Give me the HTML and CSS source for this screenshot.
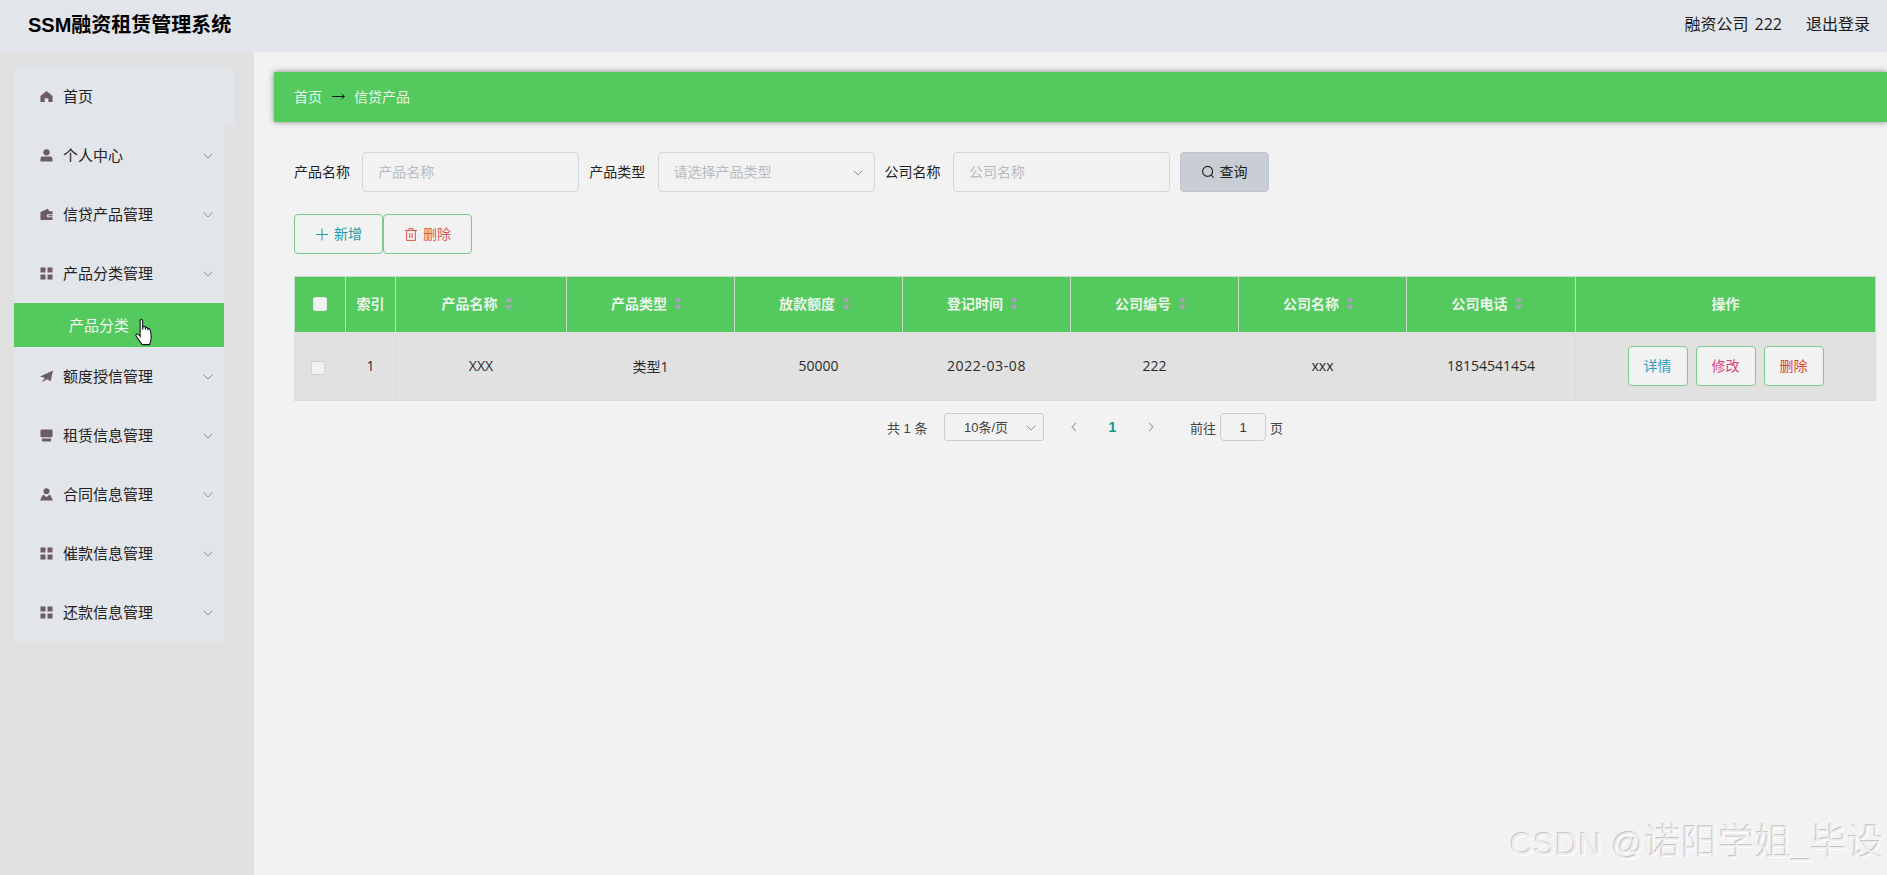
FILE: index.html
```html
<!DOCTYPE html>
<html lang="zh-CN">
<head>
<meta charset="utf-8">
<title>SSM融资租赁管理系统</title>
<link rel="stylesheet" href="styles.css">
</head>
<body>
<svg class="defs" width="0" height="0" aria-hidden="true">
  <symbol id="i-home" viewBox="0 0 14 14"><path d="M7 1 L13.5 6.5 V13 H9 V9 H5 V13 H.5 V6.5 Z"/></symbol>
  <symbol id="i-user" viewBox="0 0 14 14"><circle cx="7" cy="3.6" r="3.4"/><path d="M.5 13.5 V10.5 Q.5 8 3 8 H11 Q13.5 8 13.5 10.5 V13.5 Z"/></symbol>
  <symbol id="i-wallet" viewBox="0 0 14 14"><path d="M.5 4.2 L8.5 .8 L10 3.6 H13.5 V6.6 H9 A1.7 1.7 0 0 0 9 10 H13.5 V13 H.5 Z"/><rect x="9.3" y="7.6" width="4.2" height="1.4"/></symbol>
  <symbol id="i-grid" viewBox="0 0 14 14"><rect x=".5" y=".5" width="5.4" height="5.4"/><rect x="8.1" y=".5" width="5.4" height="5.4"/><rect x=".5" y="8.1" width="5.4" height="5.4"/><rect x="8.1" y="8.1" width="5.4" height="5.4"/></symbol>
  <symbol id="i-plane" viewBox="0 0 14 14"><path d="M14 .5 L11.5 12 L7.6 10 L1.5 13.5 L5.4 8.6 L0 7 Z"/></symbol>
  <symbol id="i-store" viewBox="0 0 14 14"><path d="M2 .5 H12 Q13.5 .5 13.5 2 V7.5 Q13.5 9 12 9 H2 Q.5 9 .5 7.5 V2 Q.5 .5 2 .5 Z"/><path d="M2 10.3 H12 V12 Q12 13.5 10.5 13.5 H3.5 Q2 13.5 2 12 Z"/></symbol>
  <symbol id="i-person" viewBox="0 0 14 14"><circle cx="7" cy="3.4" r="3.2"/><path d="M0 13.5 L2.6 8.2 Q3 7.4 4 7.4 L7 10 L10 7.4 Q11 7.4 11.4 8.2 L14 13.5 Z"/></symbol>
  <symbol id="i-chev" viewBox="0 0 10 6"><path d="M.6 .6 L5 5 L9.4 .6"/></symbol>
</svg>

<header class="topbar">
  <div class="brand">SSM融资租赁管理系统</div>
  <div class="account">
    <span class="account-name">融资公司 222</span>
    <span>退出登录</span>
  </div>
</header>

<div class="shell">
  <aside class="sidebar">
    <nav class="menu">
      <a class="menu-item menu-home"><svg class="mi"><use href="#i-home"/></svg><span>首页</span></a>
      <a class="menu-item"><svg class="mi"><use href="#i-user"/></svg><span>个人中心</span><svg class="chev"><use href="#i-chev"/></svg></a>
      <a class="menu-item"><svg class="mi"><use href="#i-wallet"/></svg><span>信贷产品管理</span><svg class="chev"><use href="#i-chev"/></svg></a>
      <a class="menu-item"><svg class="mi"><use href="#i-grid"/></svg><span>产品分类管理</span><svg class="chev"><use href="#i-chev"/></svg></a>
      <a class="menu-sub">产品分类</a>
      <a class="menu-item"><svg class="mi"><use href="#i-plane"/></svg><span>额度授信管理</span><svg class="chev"><use href="#i-chev"/></svg></a>
      <a class="menu-item"><svg class="mi"><use href="#i-store"/></svg><span>租赁信息管理</span><svg class="chev"><use href="#i-chev"/></svg></a>
      <a class="menu-item"><svg class="mi"><use href="#i-person"/></svg><span>合同信息管理</span><svg class="chev"><use href="#i-chev"/></svg></a>
      <a class="menu-item"><svg class="mi"><use href="#i-grid"/></svg><span>催款信息管理</span><svg class="chev"><use href="#i-chev"/></svg></a>
      <a class="menu-item"><svg class="mi"><use href="#i-grid"/></svg><span>还款信息管理</span><svg class="chev"><use href="#i-chev"/></svg></a>
    </nav>
  </aside>

  <main class="content">
    <div class="crumbs">
      <span>首页</span>
      <svg class="crumb-arrow" viewBox="0 0 13 7"><path d="M0 3.5 H12 M9.5 1 L12.5 3.5 L9.5 6"/></svg>
      <span>信贷产品</span>
    </div>

    <div class="panel">
      <form class="search">
        <label class="field-label">产品名称</label>
        <div class="input ph">产品名称</div>
        <label class="field-label">产品类型</label>
        <div class="input ph select">请选择产品类型<svg class="chev sel-chev"><use href="#i-chev"/></svg></div>
        <label class="field-label">公司名称</label>
        <div class="input ph">公司名称</div>
        <button type="button" class="query">
          <svg class="q-icon" viewBox="0 0 14 14"><circle cx="6.6" cy="6.4" r="5"/><path d="M10.2 10 L12.6 12.6"/></svg>查询
        </button>
      </form>

      <div class="actions">
        <button type="button" class="btn btn-add"><svg class="b-icon" viewBox="0 0 12 12"><path d="M6 0 V12 M0 6 H12"/></svg>新增</button>
        <button type="button" class="btn btn-del"><svg class="b-icon" viewBox="0 0 12 13"><path d="M0 2.5 H12 M4 2.5 V.6 H8 V2.5 M1.6 2.5 V12.4 H10.4 V2.5 M4.8 5 V10 M7.2 5 V10"/></svg>删除</button>
      </div>

      <table class="grid">
        <colgroup>
          <col class="c-check"><col class="c-index"><col class="c-name"><col class="c-type">
          <col class="c-std"><col class="c-std"><col class="c-std"><col class="c-std"><col class="c-phone"><col>
        </colgroup>
        <thead>
          <tr>
            <th><span class="check check-head"></span></th>
            <th>索引</th>
            <th><span class="th-in">产品名称<i class="sort"></i></span></th>
            <th><span class="th-in">产品类型<i class="sort"></i></span></th>
            <th><span class="th-in">放款额度<i class="sort"></i></span></th>
            <th><span class="th-in">登记时间<i class="sort"></i></span></th>
            <th><span class="th-in">公司编号<i class="sort"></i></span></th>
            <th><span class="th-in">公司名称<i class="sort"></i></span></th>
            <th><span class="th-in">公司电话<i class="sort"></i></span></th>
            <th>操作</th>
          </tr>
        </thead>
        <tbody>
          <tr>
            <td><span class="check check-row"></span></td>
            <td>1</td>
            <td>XXX</td>
            <td>类型1</td>
            <td>50000</td>
            <td class="td-date">2022-03-08</td>
            <td>222</td>
            <td>xxx</td>
            <td>18154541454</td>
            <td>
              <div class="row-btns">
                <button type="button" class="rbtn r-view">详情</button>
                <button type="button" class="rbtn r-edit">修改</button>
                <button type="button" class="rbtn r-del">删除</button>
              </div>
            </td>
          </tr>
        </tbody>
      </table>

      <div class="pager">
        <span class="p-total">共 1 条</span>
        <div class="p-size">10条/页<svg class="chev p-chev"><use href="#i-chev"/></svg></div>
        <svg class="p-arrow p-prev" viewBox="0 0 6 10"><path d="M5 .8 L1 5 L5 9.2"/></svg>
        <span class="p-num">1</span>
        <svg class="p-arrow p-next" viewBox="0 0 6 10"><path d="M1 .8 L5 5 L1 9.2"/></svg>
        <span class="p-goto">前往</span>
        <div class="p-input">1</div>
        <span>页</span>
      </div>
    </div>
  </main>
</div>

<svg class="cursor" viewBox="0 0 18 28" aria-hidden="true">
  <path d="M5 2 Q5 .6 6.3 .6 Q7.6 .6 7.6 2 V11 L8 7.8 Q9.4 7 10.3 8.2 L10.5 11 V8.8 Q11.9 8.2 12.8 9.4 L13 11.6 V10 Q14.4 9.6 15.2 10.8 Q16.8 16 16.4 20 Q16 24 14.6 26.6 H7 Q6 24.4 4 22.4 L.8 17.6 Q.2 16 1.6 15.6 Q3 15.4 5 18 Z"/>
</svg>

<div class="watermark">CSDN @<span class="wm-cjk">诺阳学姐</span>_<span class="wm-cjk">毕设</span></div>
</body>
</html>
```

FILE: styles.css
```css
* { box-sizing: border-box; }

html, body {
  margin: 0;
  height: 875px;
  overflow: hidden;
}

body {
  position: relative;
  font-family: "Liberation Sans", "Noto Sans CJK SC", sans-serif;
  font-size: 14px;
  color: #303133;
  background: #f2f2f2;
}

.defs { position: absolute; }

.topbar {
  height: 52px;
  display: flex;
  align-items: center;
  justify-content: space-between;
  padding: 0 17px 6px 28px;
  background: #e2e5ea;
  color: #1a1a1a;
}

.brand {
  font-size: 20px;
  font-weight: 700;
  color: #000;
}

.account {
  display: flex;
  gap: 24px;
  font-size: 16px;
  font-family: "Open Sans", "Noto Sans CJK SC", sans-serif;
}

.account-name { word-spacing: 2px; }

.shell {
  display: flex;
  height: 823px;
}

.sidebar {
  flex: 0 0 254px;
  background: #e1e1e1;
  padding: 15px 0 0 14px;
}

.menu {
  width: 210px;
  background: #e2e5ea;
  display: flex;
  flex-direction: column;
}

.menu-item {
  height: 59px;
  display: flex;
  align-items: center;
  padding: 0 11px 0 26px;
  font-size: 15px;
  color: #222;
  background: #e2e5ea;
}

.menu-home { width: 220px; }

.mi {
  width: 13px;
  height: 13px;
  margin-right: 10px;
  fill: #6e5c64;
  flex: none;
}

.menu-item span {
  flex: 1;
  padding-bottom: 2px;
}

.chev {
  width: 10px;
  height: 6px;
  fill: none;
  stroke: #8f8f96;
  stroke-width: 1;
  flex: none;
}

.menu-sub {
  height: 44px;
  display: flex;
  align-items: center;
  padding: 0 0 2px 55px;
  font-size: 15px;
  color: #f3f8f3;
  background: #53c95e;
}

.content {
  flex: 1;
  min-width: 0;
  padding-top: 20px;
  padding-left: 20px;
}

.crumbs {
  height: 50px;
  display: flex;
  align-items: center;
  padding: 0 0 2px 20px;
  color: #e9f5ea;
  background: #53c95e;
  box-shadow: 0 0 6px rgba(0, 0, 0, .45);
}

.crumb-arrow {
  width: 13px;
  height: 7px;
  margin: 0 9px 0 10px;
  fill: none;
  stroke: #1c1c1c;
  stroke-width: 1;
}

.panel { padding: 30px 11px 0 20px; }

.search {
  display: flex;
  align-items: center;
  height: 40px;
}

.field-label {
  width: 68.3px;
  flex: none;
  padding-bottom: 2px;
  color: #222;
}

.input {
  position: relative;
  flex: none;
  width: 217px;
  height: 40px;
  margin-right: 10px;
  padding: 0 0 2px 15px;
  display: flex;
  align-items: center;
  border: 1px solid #d0d5dc;
  border-radius: 4px;
  background: #f2f2f2;
}

.ph { color: #b6bac1; }

.select { justify-content: flex-start; }

.sel-chev {
  position: absolute;
  right: 11px;
  top: 17px;
}

.query {
  width: 89px;
  height: 40px;
  padding: 0 0 2px;
  display: flex;
  align-items: center;
  justify-content: center;
  gap: 4px;
  font: inherit;
  color: #222;
  background: #c9ced5;
  border: 1px solid #bdc4cd;
  border-radius: 4px;
}

.q-icon {
  width: 14px;
  height: 14px;
  margin-top: 2px;
  fill: none;
  stroke: #222;
  stroke-width: 1.1;
}

.actions {
  display: flex;
  margin-top: 22px;
}

.btn {
  width: 89px;
  height: 40px;
  padding: 0 0 2px 1px;
  display: flex;
  align-items: center;
  justify-content: center;
  gap: 6px;
  font: inherit;
  background: #f2f2f2;
  border: 1px solid #7cc98a;
  border-radius: 4px;
}

.btn-add { color: #1f9aa5; }
.btn-del { color: #d9564a; }

.b-icon {
  width: 12px;
  height: 13px;
  margin-top: 2px;
  fill: none;
  stroke: currentColor;
  stroke-width: 1;
}

.grid {
  width: 1582px;
  margin-top: 22px;
  border-collapse: collapse;
  table-layout: fixed;
  text-align: center;
}

.c-check { width: 51px; }
.c-index { width: 50px; }
.c-name { width: 171px; }
.c-type { width: 168px; }
.c-std { width: 168px; }
.c-phone { width: 169px; }

.grid th {
  height: 55px;
  padding: 0 0 2px;
  color: #eaf6eb;
  font-weight: 700;
  background: #53c95e;
  border: 1px solid #c3dcc6;
  border-bottom: 0;
}

.th-in {
  display: inline-flex;
  align-items: center;
  margin-right: 8px;
}

.sort {
  position: relative;
  display: inline-block;
  width: 8px;
  height: 13px;
  margin-left: 7px;
}

.sort::before, .sort::after {
  content: "";
  position: absolute;
  left: 0;
  border-left: 4px solid transparent;
  border-right: 4px solid transparent;
}

.sort::before { top: 0; border-bottom: 5px solid #a5a6b2; }
.sort::after { bottom: 0; border-top: 5px solid #a5a6b2; }

.grid td {
  height: 69px;
  padding: 0;
  color: #2a2a2a;
  background: #e1e1e1;
  border: 1px solid #d8dce4;
  border-top: 0;
  font-family: "Open Sans", "Noto Sans CJK SC", sans-serif;
}

.grid .td-date { letter-spacing: .6px; }

.check {
  display: inline-block;
  width: 14px;
  height: 14px;
  vertical-align: middle;
  border-radius: 2px;
}

.check-head {
  background: #f4f4f4;
  border: 1px solid #e6e6e6;
}

.check-row {
  margin-right: 4px;
  background: #f2f2f2;
  border: 1px solid #cdd1d8;
}

.row-btns {
  display: flex;
  justify-content: center;
  gap: 8px;
}

.rbtn {
  width: 60px;
  height: 40px;
  padding: 0 0 2px;
  font-family: "Liberation Sans", "Noto Sans CJK SC", sans-serif;
  font-size: 14px;
  background: #f2f2f2;
  border: 1px solid #7cc98a;
  border-radius: 4px;
}

.r-view { color: #2f9fc4; }
.r-edit { color: #d9457c; }
.r-del { color: #d9472f; }

.pager {
  display: flex;
  align-items: center;
  height: 30px;
  margin-top: 12px;
  padding: 0 0 2px 593px;
  font-size: 13px;
  color: #444;
}

.p-total { width: 57px; flex: none; }

.p-size {
  position: relative;
  width: 100px;
  height: 28px;
  padding: 0 0 2px 19px;
  display: flex;
  align-items: center;
  border: 1px solid #c9ccd2;
  border-radius: 3px;
}

.p-chev {
  position: absolute;
  right: 7px;
  top: 11px;
}

.p-arrow {
  width: 6px;
  height: 10px;
  fill: none;
  stroke: #a5a8ae;
  stroke-width: 1.2;
  flex: none;
}

.p-prev { margin-left: 27px; }

.p-num {
  width: 71px;
  font-size: 14px;
  text-align: center;
  font-weight: 700;
  color: #0b9a86;
}

.p-goto { margin-left: 36px; }

.p-input {
  width: 46px;
  height: 28px;
  margin: 0 4px;
  display: flex;
  align-items: center;
  justify-content: center;
  border: 1px solid #c9ccd2;
  border-radius: 4px;
  color: #333;
}

.cursor {
  position: absolute;
  left: 135px;
  top: 319px;
  width: 18px;
  height: 27px;
  fill: #fff;
  stroke: #111;
  stroke-width: 1.1;
}

.watermark {
  position: absolute;
  left: 1510px;
  top: 818px;
  font-family: "Liberation Sans", "Noto Sans CJK SC", sans-serif;
  font-size: 32px;
  line-height: 50px;
  letter-spacing: .4px;
  white-space: nowrap;
  color: #eeeeee;
  text-shadow: -1px -1px 0 #c6c6c6, 1px 1px 0 #fff;
}

.wm-cjk {
  font-size: 36.5px;
  font-weight: 300;
}
```
